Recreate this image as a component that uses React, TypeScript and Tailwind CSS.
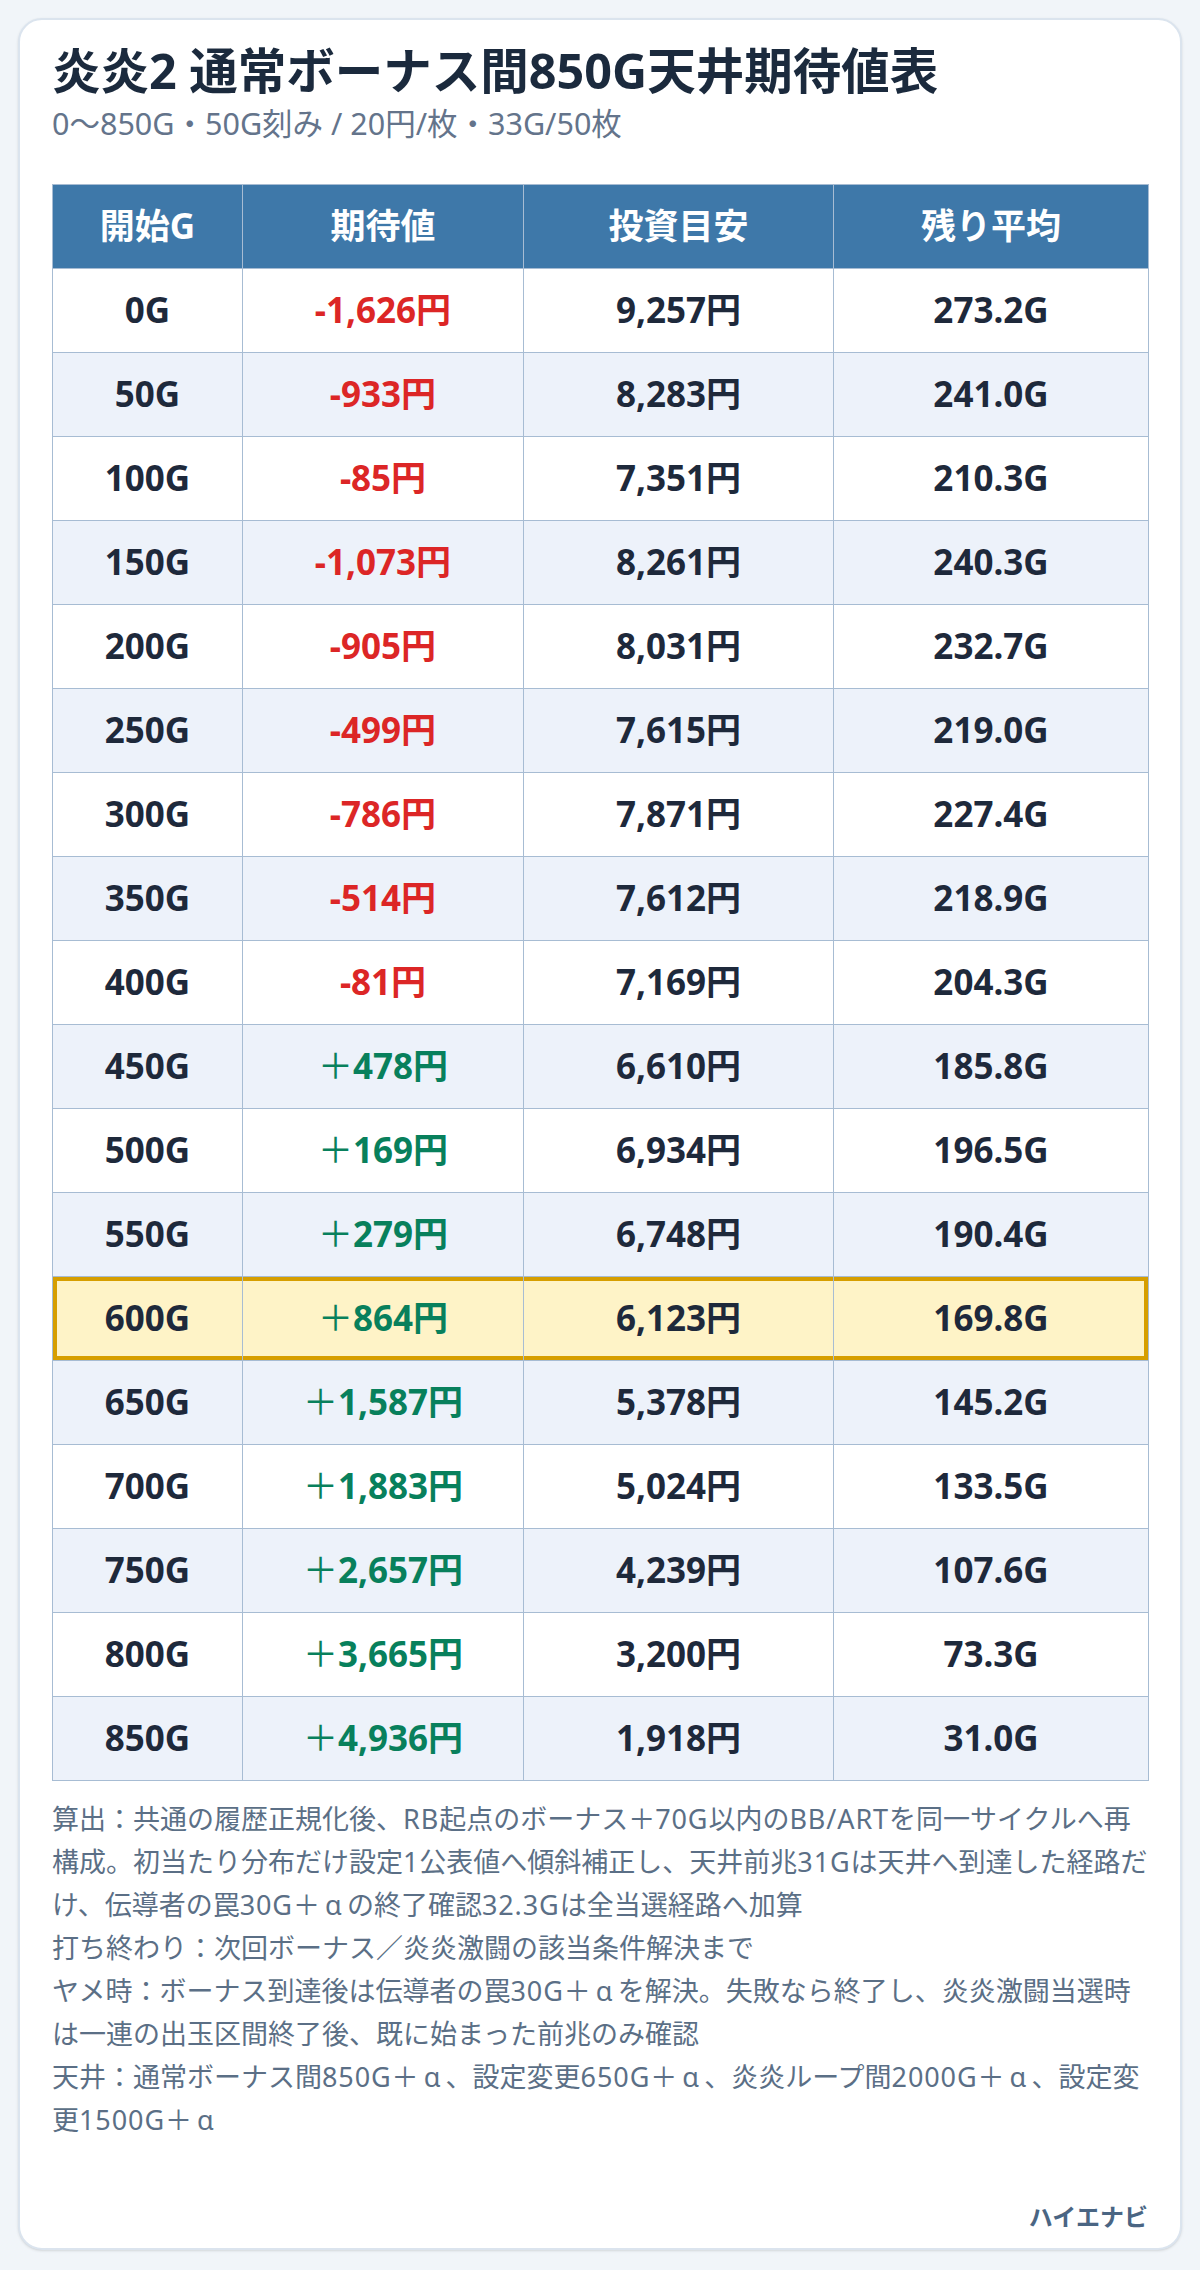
import React from 'react'

type Row = {
  start: string
  ev: string
  invest: string
  remain: string
  highlight?: boolean
}

const rows: Row[] = [
  { start: '0G', ev: '-1,626円', invest: '9,257円', remain: '273.2G' },
  { start: '50G', ev: '-933円', invest: '8,283円', remain: '241.0G' },
  { start: '100G', ev: '-85円', invest: '7,351円', remain: '210.3G' },
  { start: '150G', ev: '-1,073円', invest: '8,261円', remain: '240.3G' },
  { start: '200G', ev: '-905円', invest: '8,031円', remain: '232.7G' },
  { start: '250G', ev: '-499円', invest: '7,615円', remain: '219.0G' },
  { start: '300G', ev: '-786円', invest: '7,871円', remain: '227.4G' },
  { start: '350G', ev: '-514円', invest: '7,612円', remain: '218.9G' },
  { start: '400G', ev: '-81円', invest: '7,169円', remain: '204.3G' },
  { start: '450G', ev: '+478円', invest: '6,610円', remain: '185.8G' },
  { start: '500G', ev: '+169円', invest: '6,934円', remain: '196.5G' },
  { start: '550G', ev: '+279円', invest: '6,748円', remain: '190.4G' },
  { start: '600G', ev: '+864円', invest: '6,123円', remain: '169.8G', highlight: true },
  { start: '650G', ev: '+1,587円', invest: '5,378円', remain: '145.2G' },
  { start: '700G', ev: '+1,883円', invest: '5,024円', remain: '133.5G' },
  { start: '750G', ev: '+2,657円', invest: '4,239円', remain: '107.6G' },
  { start: '800G', ev: '+3,665円', invest: '3,200円', remain: '73.3G' },
  { start: '850G', ev: '+4,936円', invest: '1,918円', remain: '31.0G' },
]

const notes = [
  '算出：共通の履歴正規化後、RB起点のボーナス＋70G以内のBB/ARTを同一サイクルへ再構成。初当たり分布だけ設定1公表値へ傾斜補正し、天井前兆31Gは天井へ到達した経路だけ、伝導者の罠30G＋αの終了確認32.3Gは全当選経路へ加算',
  '打ち終わり：次回ボーナス／炎炎激闘の該当条件解決まで',
  'ヤメ時：ボーナス到達後は伝導者の罠30G＋αを解決。失敗なら終了し、炎炎激闘当選時は一連の出玉区間終了後、既に始まった前兆のみ確認',
  '天井：通常ボーナス間850G＋α、設定変更650G＋α、炎炎ループ間2000G＋α、設定変更1500G＋α',
]

// highlight outline drawn inside the cells so the grid lines stay visible
const hlLeft = 'shadow-[inset_4px_0_0_#d69e00,inset_0_4px_0_#d69e00,inset_0_-4px_0_#d69e00]'
const hlMid = 'shadow-[inset_0_4px_0_#d69e00,inset_0_-4px_0_#d69e00]'
const hlRight = 'shadow-[inset_-4px_0_0_#d69e00,inset_0_4px_0_#d69e00,inset_0_-4px_0_#d69e00]'

// latin runs a touch wider, α set full-width like the CJK text around it
function NoteLine({ text }: { text: string }) {
  const parts = text.split(/([A-Za-z0-9./]+|α)/)
  return (
    <p>
      {parts.map((p, i) => {
        if (p === 'α') {
          return (
            <span key={i} className="inline-block w-[1em] text-center">
              α
            </span>
          )
        }
        if (/^[A-Za-z0-9./]+$/.test(p)) {
          return (
            <span key={i} className="tracking-[0.9px]">
              {p}
            </span>
          )
        }
        return <React.Fragment key={i}>{p}</React.Fragment>
      })}
    </p>
  )
}

function EvText({ value }: { value: string }) {
  if (value.startsWith('+')) {
    return (
      <span className="text-[#08805c]">
        <span className="font-normal">＋</span>
        {value.slice(1)}
      </span>
    )
  }
  return <span className="text-[#dc2626]">{value}</span>
}

export default function App() {
  return (
    <div
      className="min-h-screen bg-[#f1f5f9] p-[18px]"
      style={{ fontFamily: '"Noto Sans", "Noto Sans CJK JP", sans-serif' }}
    >
      <div className="rounded-[24px] border-2 border-[#dbe4ee] bg-white px-[32px] pt-[21px] pb-[13px] shadow-sm">
        {/* Header */}
        <h1 className="text-[48.5px] leading-[58px] font-bold text-[#1b2a3d]">
          炎炎2 通常ボーナス間850G天井期待値表
        </h1>
        <p className="mt-[2px] text-[30.5px] leading-[45px] text-[#64748b]">
          0〜850G・50G刻み / 20円/枚・33G/50枚
        </p>

        {/* Table */}
        <table className="mt-[38px] w-full table-fixed border-collapse text-center text-[35px] font-bold text-[#1e293b]">
          <colgroup>
            <col className="w-[190px]" />
            <col className="w-[281px]" />
            <col className="w-[310px]" />
            <col className="w-[315px]" />
          </colgroup>
          <thead>
            <tr className="bg-[#3e78a9] text-white">
              <th className="h-[84px] border border-[#a7bcd3] p-0">開始G</th>
              <th className="h-[84px] border border-[#a7bcd3] p-0">期待値</th>
              <th className="h-[84px] border border-[#a7bcd3] p-0">投資目安</th>
              <th className="h-[84px] border border-[#a7bcd3] p-0">残り平均</th>
            </tr>
          </thead>
          <tbody>
            {rows.map((r, i) => {
              const bg = r.highlight ? 'bg-[#fef3c7]' : i % 2 === 1 ? 'bg-[#edf2fa]' : 'bg-white'
              const cell = 'h-[84px] border border-[#a7bcd3] p-0'
              return (
                <tr key={r.start} className={bg}>
                  <td className={r.highlight ? `${cell} ${hlLeft}` : cell}>{r.start}</td>
                  <td className={r.highlight ? `${cell} ${hlMid}` : cell}>
                    <EvText value={r.ev} />
                  </td>
                  <td className={r.highlight ? `${cell} ${hlMid}` : cell}>{r.invest}</td>
                  <td className={r.highlight ? `${cell} ${hlRight}` : cell}>{r.remain}</td>
                </tr>
              )
            })}
          </tbody>
        </table>

        {/* Notes */}
        <div className="mt-[16px] text-[27px] leading-[43px] text-[#5b6f86]">
          {notes.map((n) => (
            <NoteLine key={n} text={n} />
          ))}
        </div>

        {/* Footer */}
        <div className="mt-[58px] text-right text-[24px] leading-[36px] font-bold text-[#4a6583]">
          ハイエナビ
        </div>
      </div>
    </div>
  )
}
